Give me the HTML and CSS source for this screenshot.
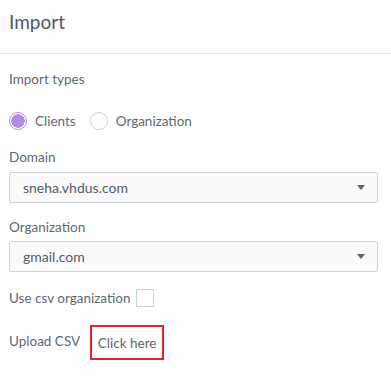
FILE: index.html
```html
<!DOCTYPE html>
<html>
<head>
<meta charset="utf-8">
<link rel="stylesheet" href="styles.css">
</head>
<body>
<div class="panel">
  <div class="header"><h1 class="title">Import</h1></div>
  <div class="body">
    <div class="label types-label">Import types</div>
    <div class="radios">
      <label class="radio"><span class="dot checked"></span><span>Clients</span></label>
      <label class="radio"><span class="dot"></span><span>Organization</span></label>
    </div>
    <div class="label domain-label">Domain</div>
    <div class="select domain-select"><span>sneha.vhdus.com</span><span class="caret"></span></div>
    <div class="label org-label">Organization</div>
    <div class="select org-select"><span>gmail.com</span><span class="caret"></span></div>
    <div class="check-row"><span>Use csv organization</span><span class="box"></span></div>
    <div class="upload-row"><span class="upload-label">Upload CSV</span><span class="click">Click here</span></div>
  </div>
</div>
</body>
</html>
```

FILE: styles.css
```css
* { box-sizing: border-box; }
html, body { margin: 0; padding: 0; background: #fff; }
body {
  font-family: Lato, "Open Sans", sans-serif;
  color: #606872;
  width: 391px;
  height: 387px;
  overflow: hidden;
}
.header {
  height: 54px;
  border-bottom: 1px solid #e2e2ea;
  padding: 10px 9px 0;
}
.title {
  margin: 0;
  font-size: 19px;
  font-weight: 400;
  line-height: 24px;
  color: #50565e;
}
.body {
  padding: 0 13px 0 9px;
  display: flex;
  flex-direction: column;
}
.label {
  font-size: 13.5px;
  line-height: 16px;
}
.types-label { margin-top: 17px; }
.radios {
  display: flex;
  align-items: center;
  margin-top: 25px;
  font-size: 13.5px;
}
.radio {
  display: flex;
  align-items: center;
  gap: 8px;
  margin-right: 14px;
}
.dot {
  width: 18px;
  height: 18px;
  border-radius: 50%;
  border: 1px solid #c9d1da;
  background: #fff;
  display: inline-block;
}
.dot.checked {
  border: 1px solid #b98be6;
  background: radial-gradient(circle, #b28be3 0 6.5px, #fff 7px);
}
.domain-label { margin-top: 19px; }
.domain-select { margin-top: 7px; }
.org-label { margin-top: 16px; }
.org-select { margin-top: 6px; }
.select {
  height: 31px;
  border: 1px solid #cbd3db;
  border-radius: 2px;
  background: #fafafa;
  display: flex;
  align-items: center;
  justify-content: space-between;
  padding: 0 12px 0 13px;
  font-size: 14px;
  color: #555c66;
}
.caret {
  width: 0;
  height: 0;
  border-left: 4.5px solid transparent;
  border-right: 4.5px solid transparent;
  border-top: 5px solid #5d6570;
}
.check-row {
  margin-top: 17px;
  display: flex;
  align-items: center;
  gap: 6px;
  font-size: 13.5px;
}
.box {
  width: 18px;
  height: 18px;
  border: 1px solid #c9d1da;
  background: #fff;
}
.upload-row {
  margin-top: 18px;
  display: flex;
  align-items: flex-start;
  font-size: 13.5px;
}
.upload-label { margin-top: 8px; }
.click {
  margin-left: 10px;
  width: 74px;
  height: 35px;
  border: 2px solid #e8202a;
  display: flex;
  align-items: center;
  justify-content: center;
  font-size: 13.5px;
}
```
